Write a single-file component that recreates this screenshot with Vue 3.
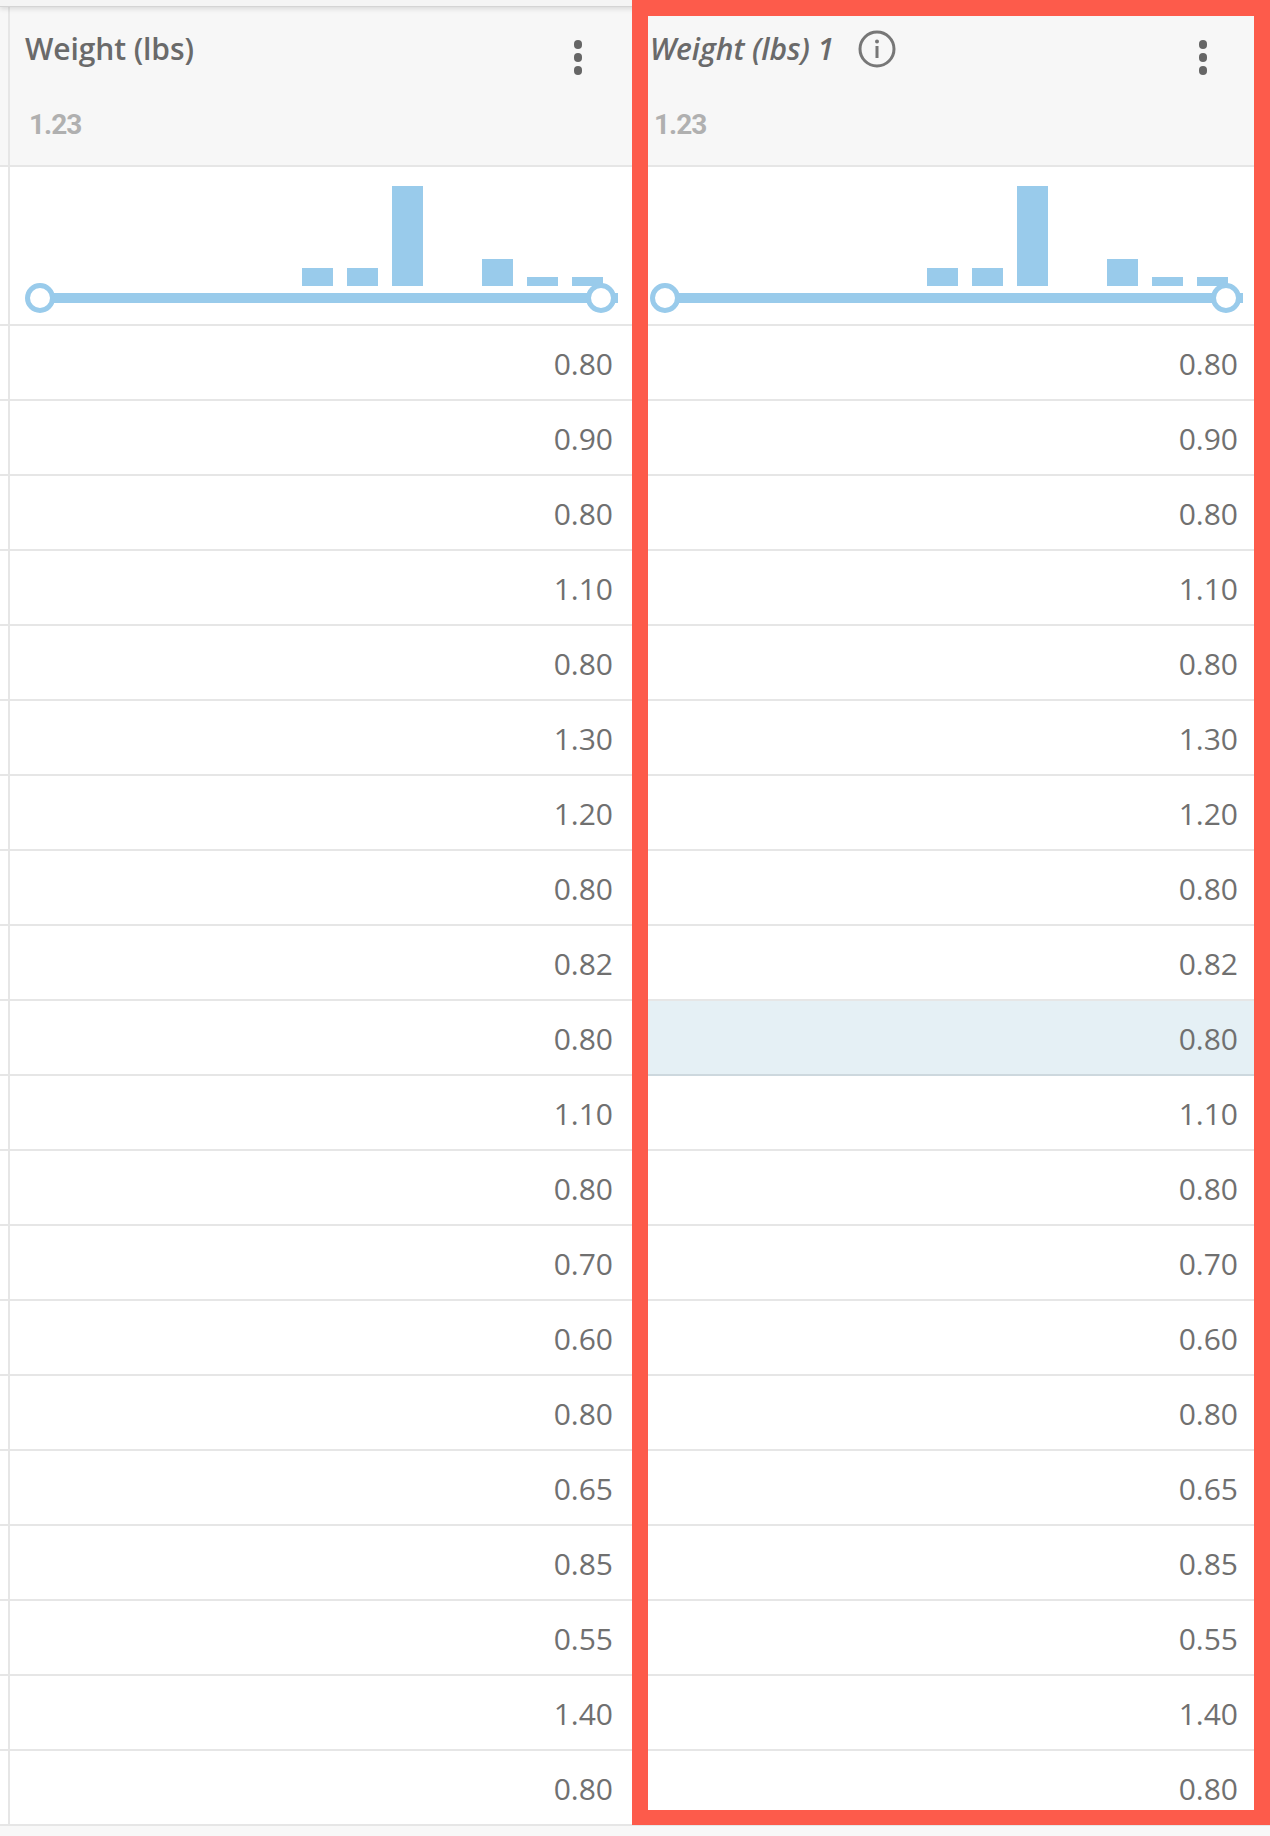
<script setup>
const values = ['0.80', '0.90', '0.80', '1.10', '0.80', '1.30', '1.20', '0.80', '0.82', '0.80', '1.10', '0.80', '0.70', '0.60', '0.80', '0.65', '0.85', '0.55', '1.40', '0.80']
const bars = [0, 0, 0, 0, 0, 0, 18, 18, 100, 0, 27, 9, 9]
const highlightedRow = 9
const columns = [
  { title: 'Weight (lbs)', average: '1.23', renamed: false },
  { title: 'Weight (lbs) 1', average: '1.23', renamed: true }
]
</script>

<template>
  <div class="page">
    <div class="topbar"></div>

    <div class="row head-row">
      <div class="stub head-cell"></div>
      <div v-for="col in columns" :key="col.title" class="head-cell" :class="{ renamed: col.renamed }">
        <div class="head-top">
          <span class="title">{{ col.title }}</span>
          <svg v-if="col.renamed" class="info" width="38" height="38" viewBox="0 0 38 38">
            <circle cx="19" cy="19" r="17" fill="none" stroke="#777" stroke-width="3" />
            <circle cx="19" cy="11.5" r="2" fill="#777" />
            <rect x="17.5" y="16" width="3" height="12" fill="#777" />
          </svg>
          <span class="kebab"><i></i><i></i><i></i></span>
        </div>
        <div class="average">{{ col.average }}</div>
      </div>
      <div class="stub head-cell"></div>
    </div>

    <div class="row">
      <div class="stub cell"></div>
      <div v-for="col in columns" :key="col.title" class="cell spark" :class="{ renamed: col.renamed }">
        <div class="bars">
          <span v-for="(h, i) in bars" :key="i" class="bar" :style="{ height: h + 'px' }"></span>
        </div>
        <div class="track">
          <span class="handle left"></span>
          <span class="handle right"></span>
        </div>
      </div>
      <div class="stub cell"></div>
    </div>

    <div v-for="(value, i) in values" :key="i" class="row">
      <div class="stub cell"></div>
      <div class="cell value first">{{ value }}</div>
      <div class="cell value" :class="{ active: i === highlightedRow }">{{ value }}</div>
      <div class="stub cell"></div>
    </div>

    <div class="footer"></div>
    <div class="outline"></div>
  </div>
</template>

<style>
html, body {
  margin: 0;
  background: #fff;
}
</style>

<style scoped>
.page {
  position: relative;
  width: 1270px;
  height: 1836px;
  overflow: hidden;
  font-family: "Open Sans", sans-serif;
  color: #666;
  background: #fff;
}

.topbar {
  position: relative;
  z-index: 1;
  height: 7px;
  box-sizing: border-box;
  background: #f4f4f4;
  border-bottom: 1px solid #d4d4d4;
  box-shadow: 0 2px 5px rgba(0, 0, 0, 0.12);
}

.row {
  display: grid;
  grid-template-columns: 8px 625px 625px 12px;
}

.head-cell {
  box-sizing: border-box;
  height: 160px;
  padding: 0 0 0 15px;
  background: #f7f7f7;
  border-bottom: 2px solid #e6e6e6;
  border-left: 2px solid #e6e6e6;
}

.head-cell.stub {
  padding: 0;
  border-left: 0;
}

.head-cell.renamed {
  padding-left: 17px;
  border-left: 0;
}

.head-top {
  display: flex;
  align-items: flex-start;
  height: 81px;
  padding-top: 20px;
  box-sizing: border-box;
}

.title {
  font-size: 30px;
  line-height: 44px;
  font-weight: 600;
  letter-spacing: -0.1px;
  color: #6a6a6a;
}

.renamed .title {
  font-style: italic;
}

.info {
  margin-left: 24px;
  margin-top: 3px;
}

.kebab {
  display: flex;
  flex-direction: column;
  gap: 4.5px;
  margin-left: auto;
  margin-right: 51px;
  margin-top: 13px;
}

.kebab i {
  display: block;
  width: 8.5px;
  height: 8.5px;
  border-radius: 50%;
  background: #666;
}

.average {
  margin: 20px 0 0 4px;
  font-family: Roboto, sans-serif;
  font-size: 28px;
  line-height: 34px;
  font-weight: 700;
  letter-spacing: -1px;
  color: #b0b0b0;
}

.cell {
  box-sizing: border-box;
  border-bottom: 2px solid #e6e6e6;
}

.cell.stub {
  border-left: 0;
}

.spark {
  position: relative;
  height: 159px;
  padding: 19px 0 0 22px;
  border-left: 2px solid #e6e6e6;
}

.spark.renamed {
  padding-left: 24px;
  border-left: 0;
}

.bars {
  display: flex;
  align-items: flex-end;
  gap: 14px;
  height: 100px;
}

.bar {
  width: 31px;
  background: #99cbeb;
}

.track {
  position: relative;
  height: 10px;
  margin: 7px 0 0 0;
  width: 586px;
  background: #99cbeb;
}

.handle {
  position: absolute;
  top: -10px;
  width: 30px;
  height: 30px;
  box-sizing: border-box;
  border: 5px solid #99cbeb;
  border-radius: 50%;
  background: #fff;
}

.handle.left {
  left: -7px;
}

.handle.right {
  right: 2px;
}

.value {
  height: 75px;
  padding-right: 20px;
  text-align: right;
  font-size: 30px;
  line-height: 75px;
  font-weight: 400;
  color: #707070;
}

.value.first {
  border-left: 2px solid #e6e6e6;
}

.value.active {
  background: #e5f0f5;
  border-bottom-color: #cdd8de;
}

.footer {
  height: 10px;
  background: #f8f8f8;
}

.outline {
  position: absolute;
  z-index: 2;
  top: 0;
  left: 632px;
  width: 638px;
  height: 1825px;
  box-sizing: border-box;
  border: 16px solid #fd5b4b;
  border-bottom-width: 15px;
}
</style>
